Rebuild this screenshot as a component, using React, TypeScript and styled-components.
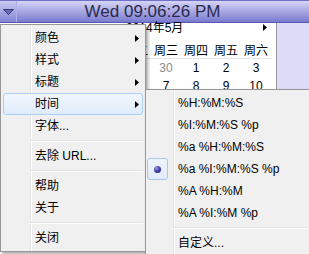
import React from "react";
import styled, { createGlobalStyle, css } from "styled-components";

const GlobalStyle = createGlobalStyle`
  html, body { margin: 0; padding: 0; background: #dcdcf8; overflow: hidden; }
  body { font-family: "Liberation Sans", "Noto Sans CJK SC", sans-serif; }
`;

const Window = styled.div`
  position: relative;
  width: 309px;
  height: 254px;
  display: flex;
  flex-direction: column;
  overflow: hidden;
`;

const TopBar = styled.div`
  flex: none;
  height: 23px;
  box-sizing: border-box;
  display: flex;
  align-items: stretch;
  background: linear-gradient(#d4d4f6, #7a7acf);
  border-top: 1px solid #7070c6;
  border-bottom: 1px solid #5858b2;
`;

const DropButton = styled.div`
  width: 17px;
  box-sizing: border-box;
  display: flex;
  align-items: center;
  justify-content: center;
  border-right: 1px solid #b0b0e6;
  background: linear-gradient(#cbcbf2, #8484d4);
`;

const Clock = styled.div`
  flex: 1;
  text-align: center;
  padding-right: 21px;
  font-family: "Liberation Sans", sans-serif;
  font-size: 17px;
  line-height: 21px;
  color: #2a2a4c;
`;

const Body = styled.div`
  flex: 1;
  display: flex;
`;

const Calendar = styled.div`
  width: 277px;
  box-sizing: border-box;
  border-right: 1px solid #9c9c9c;
  background: #ffffff;
  display: flex;
  flex-direction: column;
  font-size: 12px;
  color: #000;
`;

const Side = styled.div`
  flex: 1;
  background: #dcdcf8;
`;

const CalHeader = styled.div`
  height: 18px;
  display: flex;
  align-items: flex-start;
  padding: 0 9px 0 126px;
  line-height: 10px;
`;

const Spacer = styled.div`
  flex: 1;
`;

const NavArrow = styled.svg`
  margin-top: 1px;
`;

const CalRow = styled.div<{ $head?: boolean }>`
  display: grid;
  grid-template-columns: repeat(7, 30px);
  width: 210px;
  margin-left: 61px;
  height: ${(p) => (p.$head ? "17px" : "18px")};
  align-items: center;
  justify-items: center;
  ${(p) =>
    p.$head &&
    css`
      border-bottom: 1px solid #e4e4e4;
    `}
`;

const DayCell = styled.span<{ $other?: boolean }>`
  color: ${(p) => (p.$other ? "#8a8a8a" : "#000")};
`;

const Menu = styled.div<{ $left: number; $top: number; $width: number; $height: number; $line: number }>`
  position: absolute;
  left: ${(p) => p.$left}px;
  top: ${(p) => p.$top}px;
  width: ${(p) => p.$width}px;
  height: ${(p) => p.$height}px;
  box-sizing: border-box;
  padding: 2px;
  border: 1px solid #979797;
  background: linear-gradient(
    to right,
    #f0f0f0 ${(p) => p.$line}px,
    #e2e3e3 ${(p) => p.$line}px,
    #e2e3e3 ${(p) => p.$line + 1}px,
    #ffffff ${(p) => p.$line + 1}px,
    #ffffff ${(p) => p.$line + 2}px,
    #f0f0f0 ${(p) => p.$line + 2}px
  );
  box-shadow: 2px 2px 3px rgba(0, 0, 0, 0.35);
  font-size: 12px;
  color: #000;
`;

const Item = styled.div<{ $active?: boolean }>`
  height: 22px;
  box-sizing: border-box;
  display: flex;
  align-items: center;
  border: 1px solid transparent;
  border-radius: 3px;
  ${(p) =>
    p.$active &&
    css`
      border-color: #aecdf2;
      background: linear-gradient(#f2f7fe, #dfebfb);
    `}
`;

const Gutter = styled.div<{ $checked?: boolean }>`
  width: 21px;
  height: 22px;
  margin-left: -2px;
  flex: none;
  box-sizing: border-box;
  display: flex;
  align-items: center;
  justify-content: center;
  border-radius: 3px;
  ${(p) =>
    p.$checked &&
    css`
      border: 1px solid #a9c8ef;
      background: linear-gradient(#eef4fd, #e1ebfa);
    `}
`;

const RadioDot = styled.div`
  width: 7px;
  height: 7px;
  border-radius: 50%;
  background: radial-gradient(circle at 35% 30%, #a0a0e8 0%, #4646a8 45%, #1c1c66 100%);
`;

const Label = styled.span<{ $indent: number }>`
  margin-left: ${(p) => p.$indent}px;
  white-space: nowrap;
  line-height: 14px;
`;

const SubArrow = styled.svg`
  margin-left: auto;
  margin-right: 3px;
`;

const Separator = styled.div<{ $indent: number }>`
  height: 8px;
  margin-left: ${(p) => p.$indent}px;
  background: linear-gradient(#e0e0e0, #e0e0e0) 0 3px / 100% 1px no-repeat,
    linear-gradient(#ffffff, #ffffff) 0 4px / 100% 1px no-repeat;
`;

const Arrow = () => (
  <SubArrow width="4" height="7" viewBox="0 0 4 7">
    <polygon points="0,0 4,3.5 0,7" fill="#000" />
  </SubArrow>
);

type Entry = { label?: string; sub?: boolean; active?: boolean; checked?: boolean; sep?: boolean };

const mainItems: Entry[] = [
  { label: "颜色", sub: true },
  { label: "样式", sub: true },
  { label: "标题", sub: true },
  { label: "时间", sub: true, active: true },
  { label: "字体..." },
  { sep: true },
  { label: "去除 URL..." },
  { sep: true },
  { label: "帮助" },
  { label: "关于" },
  { sep: true },
  { label: "关闭" },
];

const timeItems: Entry[] = [
  { label: "%H:%M:%S" },
  { label: "%I:%M:%S %p" },
  { label: "%a %H:%M:%S" },
  { label: "%a %I:%M:%S %p", checked: true },
  { label: "%A %H:%M" },
  { label: "%A %I:%M %p" },
  { sep: true },
  { label: "自定义..." },
];

const weekdays = ["周日", "周一", "周二", "周三", "周四", "周五", "周六"];
const weeks: { d: number; other?: boolean }[][] = [
  [{ d: 27, other: true }, { d: 28, other: true }, { d: 29, other: true }, { d: 30, other: true }, { d: 1 }, { d: 2 }, { d: 3 }],
  [4, 5, 6, 7, 8, 9, 10].map((d) => ({ d })),
];

const renderMenu = (items: Entry[], labelIndent: number, sepIndent: number) =>
  items.map((it, i) =>
    it.sep ? (
      <Separator key={i} $indent={sepIndent} />
    ) : (
      <Item key={i} $active={it.active}>
        <Gutter $checked={it.checked}>{it.checked && <RadioDot />}</Gutter>
        <Label $indent={labelIndent}>{it.label}</Label>
        {it.sub && <Arrow />}
      </Item>
    )
  );

export default function App() {
  return (
    <>
      <GlobalStyle />
      <Window>
        <TopBar>
          <DropButton>
            <svg width="11" height="6" viewBox="0 0 11 6">
              <polygon points="0.5,0.5 10.5,0.5 5.5,5.5" fill="#6a6ab6" stroke="#36367a" strokeWidth="1" />
            </svg>
          </DropButton>
          <Clock>Wed 09:06:26 PM</Clock>
        </TopBar>
        <Body>
          <Calendar>
            <CalHeader>
              <span>2014年5月</span>
              <Spacer />
              <NavArrow width="4" height="7" viewBox="0 0 4 7">
                <polygon points="0,0 4,3.5 0,7" fill="#000" />
              </NavArrow>
            </CalHeader>
            <CalRow $head>
              {weekdays.map((w) => (
                <span key={w}>{w}</span>
              ))}
            </CalRow>
            {weeks.map((wk, i) => (
              <CalRow key={i}>
                {wk.map((c, j) => (
                  <DayCell key={j} $other={c.other}>
                    {c.d}
                  </DayCell>
                ))}
              </CalRow>
            ))}
          </Calendar>
          <Side />
        </Body>
        <Menu $left={0} $top={24} $width={146} $height={228} $line={29}>
          {renderMenu(mainItems, 12, 27)}
        </Menu>
        <Menu $left={145} $top={89} $width={180} $height={200} $line={27}>
          {renderMenu(timeItems, 10, 25)}
        </Menu>
      </Window>
    </>
  );
}
